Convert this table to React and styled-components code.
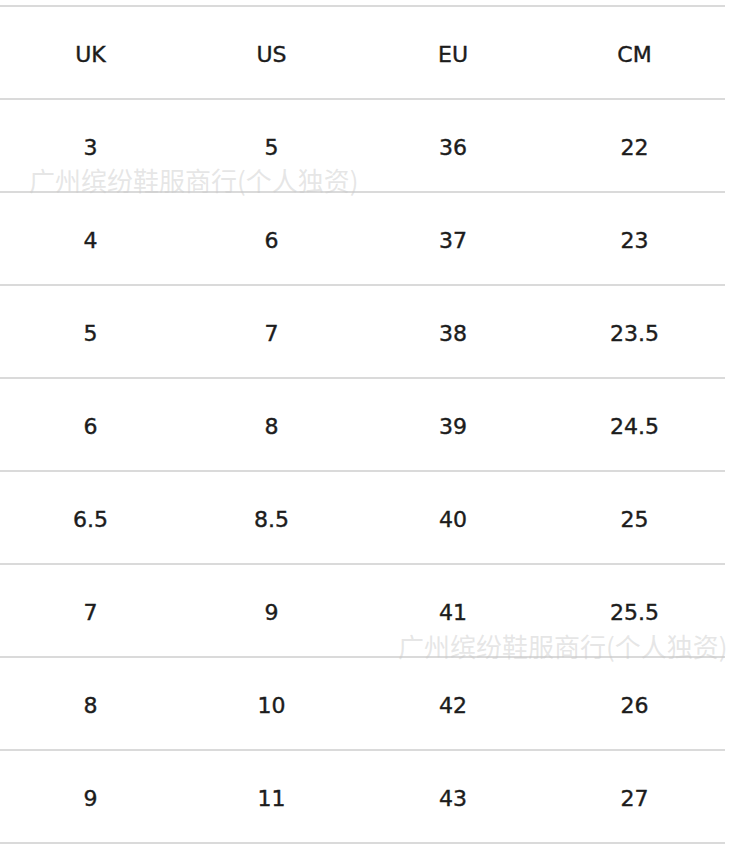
import React from "react";
import styled, { createGlobalStyle } from "styled-components";

const Global = createGlobalStyle`
  html, body { margin: 0; padding: 0; background: #fff; }
  body { font-family: "DejaVu Sans", "Noto Sans", sans-serif; }
`;

const Page = styled.div`
  position: relative;
  width: 750px;
  height: 847px;
  overflow: hidden;
  background: #fff;
  padding-top: 5px;
  box-sizing: border-box;
`;

const Table = styled.div`
  width: 725px;
  border-bottom: 2px solid #dadada;
`;

const Row = styled.div`
  display: grid;
  grid-template-columns: 181px 181px 182px 181px;
  height: 93px;
  box-sizing: border-box;
  border-top: 2px solid #dadada;
  align-items: center;
  padding-top: 3px;
`;

const Cell = styled.div`
  text-align: center;
  font-size: 22px;
  color: #1c1c1c;
  -webkit-text-stroke: 0.4px #1c1c1c;
`;

const Watermark = styled.div`
  position: absolute;
  left: ${(p) => p.$x}px;
  top: ${(p) => p.$y}px;
  font-family: "Noto Sans CJK SC", sans-serif;
  font-size: 26px;
  line-height: 1;
  color: rgba(200, 200, 200, 0.45);
  white-space: nowrap;
  pointer-events: none;
`;

const header = ["UK", "US", "EU", "CM"];
const rows = [
  ["3", "5", "36", "22"],
  ["4", "6", "37", "23"],
  ["5", "7", "38", "23.5"],
  ["6", "8", "39", "24.5"],
  ["6.5", "8.5", "40", "25"],
  ["7", "9", "41", "25.5"],
  ["8", "10", "42", "26"],
  ["9", "11", "43", "27"],
];

export default function App() {
  return (
    <>
      <Global />
      <Page>
        <Table>
          <Row>
            {header.map((h) => (
              <Cell key={h}>{h}</Cell>
            ))}
          </Row>
          {rows.map((r, i) => (
            <Row key={i}>
              {r.map((c, j) => (
                <Cell key={j}>{c}</Cell>
              ))}
            </Row>
          ))}
        </Table>
        <Watermark $x={29} $y={167}>广州缤纷鞋服商行(个人独资)</Watermark>
        <Watermark $x={398} $y={633}>广州缤纷鞋服商行(个人独资)</Watermark>
      </Page>
    </>
  );
}
